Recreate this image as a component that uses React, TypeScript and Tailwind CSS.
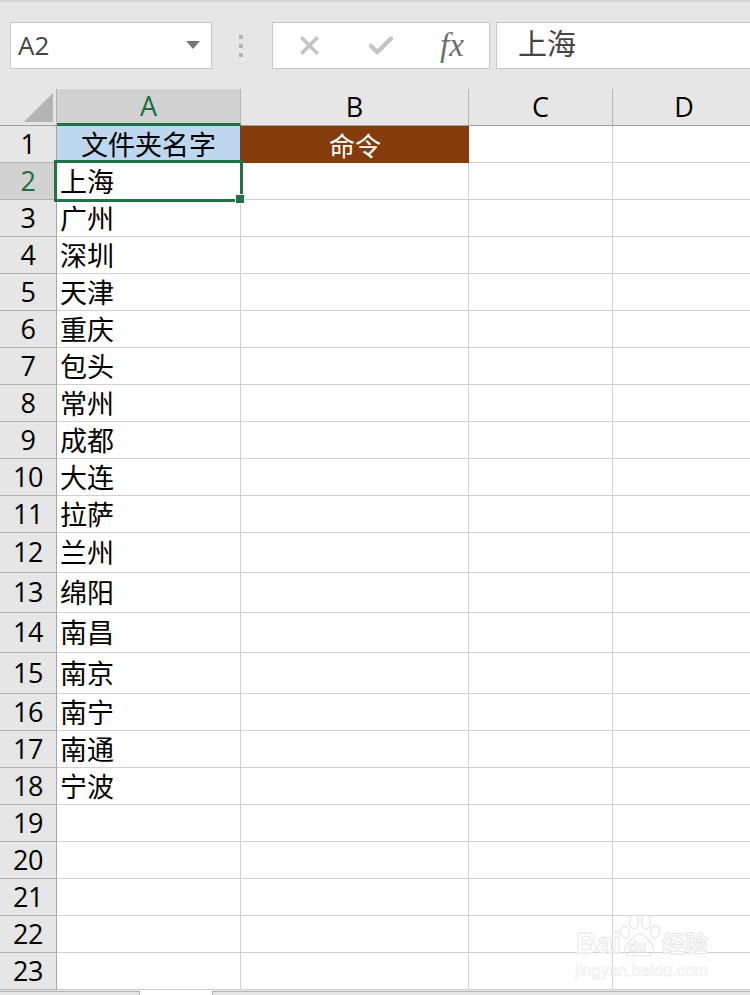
import { Check, X } from "lucide-react";

const latin = "font-['Open_Sans','Noto_Sans_CJK_SC',sans-serif]";
const cjk = "font-['Noto_Sans_CJK_SC',sans-serif]";

const rows: [number, string][] = [
  [37, "文件夹名字"],
  [37, "上海"],
  [37, "广州"],
  [37, "深圳"],
  [37, "天津"],
  [37, "重庆"],
  [37, "包头"],
  [37, "常州"],
  [37, "成都"],
  [37, "大连"],
  [37, "拉萨"],
  [40, "兰州"],
  [40, "绵阳"],
  [40, "南昌"],
  [41, "南京"],
  [37, "南宁"],
  [37, "南通"],
  [37, "宁波"],
  [37, ""],
  [37, ""],
  [37, ""],
  [37, ""],
  [37, ""],
];

function ColumnHead({ label, className }: { label: string; className: string }) {
  return (
    <div
      className={`flex items-center justify-center border-r border-b border-r-[#b4b4b4] border-b-[#9f9f9f] text-[27px] ${className}`}
    >
      {label}
    </div>
  );
}

function Row({ index, height, text }: { index: number; height: number; text: string }) {
  const active = index === 2;
  const first = index === 1;
  return (
    <div className="flex" style={{ height }}>
      <div
        className={`w-[57px] shrink-0 flex items-center justify-center border-r border-b border-r-[#a6a6a6] border-b-[#b4b4b4] text-[27px] tracking-[-0.5px] ${latin} ${
          active ? "bg-[#d2d2d2] text-[#1f6b45]" : "bg-[#e6e6e6] text-black"
        }`}
      >
        {index}
      </div>
      <div
        className={`w-[184px] shrink-0 flex items-center border-r border-b text-[27px] text-black ${cjk} ${
          first
            ? "justify-center bg-[#bdd7ee] border-b-[#d0d0d0] border-r-[#843c0c]"
            : "pl-[3px] bg-white border-[#d0d0d0]"
        }`}
      >
        {text}
      </div>
      <div
        className={`w-[228px] shrink-0 flex items-center justify-center border-b text-[26px] ${cjk} ${
          first
            ? "bg-[#843c0c] border-[#843c0c] text-white"
            : "bg-white border-r border-[#d0d0d0]"
        }`}
      >
        {first ? "命令" : ""}
      </div>
      <div className="w-[144px] shrink-0 bg-white border-r border-b border-[#d0d0d0]" />
      <div className="flex-1 bg-white border-b border-[#d0d0d0]" />
    </div>
  );
}

function Watermark() {
  return (
    <div className="absolute left-[574px] top-[914px] w-[136px] h-[66px] pointer-events-none text-white [-webkit-text-stroke:0.8px_#e4e4e4]">
      <div className="absolute left-[2px] top-[12px] text-[29px] leading-[34px] font-bold font-['Liberation_Sans',sans-serif]">
        Bai
      </div>
      <svg
        className="absolute left-[46px] top-0"
        width="42"
        height="46"
        viewBox="0 0 42 46"
        fill="none"
        stroke="#e6e6e6"
        strokeWidth="1.2"
      >
        <ellipse cx="5" cy="18" rx="4" ry="6" transform="rotate(-15 5 18)" />
        <ellipse cx="14" cy="8" rx="4.5" ry="7" />
        <ellipse cx="26" cy="8" rx="4.5" ry="7" />
        <ellipse cx="35" cy="18" rx="4.5" ry="6" transform="rotate(15 35 18)" />
        <path d="M20 20c5 0 7 5 11 9 4 4 4 13-4 13-3 0-5-1-8-1s-5 1-8 1c-7 0-8-8-4-12 5-4 7-10 13-10z" />
      </svg>
      <div className="absolute left-[54px] top-[24px] text-[15px] leading-[18px] font-bold font-['Liberation_Sans',sans-serif]">
        du
      </div>
      <div className={`absolute left-[88px] top-[13px] text-[23px] leading-[30px] font-bold whitespace-nowrap ${cjk}`}>
        经验
      </div>
      <div className="absolute left-[1px] top-[46px] text-[16.5px] leading-[20px] whitespace-nowrap font-['Liberation_Sans',sans-serif] [-webkit-text-stroke:0.5px_#e8e8e8]">
        jingyan.baidu.com
      </div>
    </div>
  );
}

export default function App() {
  return (
    <div className={`relative w-[750px] h-[995px] overflow-hidden bg-[#e6e6e6] ${latin}`}>
      {/* Formula bar */}
      <div className="h-[89px] pt-[20px] border-t-2 border-[#d4d4d4] flex items-start pl-[10px]">
        <div className="w-[202px] h-[47px] bg-white border border-[#c6c6c6] flex items-center pl-[7px] pr-[11px] justify-between">
          <span className="text-[26px] text-[#444444]">A2</span>
          <div className="w-0 h-0 border-x-[7px] border-x-transparent border-t-[8px] border-t-[#777777] mb-[2px]" />
        </div>
        <div className="w-[60px] h-[47px] flex flex-col items-center justify-center gap-[5px] pr-[2px]">
          <div className="w-[4px] h-[4px] bg-[#b4b4b4]" />
          <div className="w-[4px] h-[4px] bg-[#b4b4b4]" />
          <div className="w-[4px] h-[4px] bg-[#b4b4b4]" />
        </div>
        <div className="w-[218px] h-[47px] bg-white border border-[#c6c6c6] flex items-center pl-[22px]">
          <X size={29} strokeWidth={3} className="text-[#c4c4c4]" />
          <Check size={30} strokeWidth={3.5} className="text-[#c4c4c4] ml-[42px]" />
          <span className="ml-[44px] text-[33px] italic text-[#6e6e6e] font-['Liberation_Serif',serif]">fx</span>
        </div>
        <div className="ml-[6px] flex-1 h-[47px] bg-white border border-r-0 border-[#c6c6c6] flex items-center pl-[21px] pb-[6px]">
          <span className={`text-[29px] text-[#444444] ${cjk}`}>上海</span>
        </div>
      </div>

      {/* Column headers */}
      <div className="flex h-[37px]">
        <div className="w-[57px] shrink-0 border-r border-b border-r-[#b4b4b4] border-b-[#9f9f9f] pl-[24px] pt-[4px]">
          <div className="w-[29px] h-[29px] bg-[#b4b4b4] [clip-path:polygon(100%_0,100%_100%,0_100%)]" />
        </div>
        <ColumnHead label="A" className="w-[184px] shrink-0 bg-[#d2d2d2] text-[#1f6b45] border-b-[3px] border-b-[#217346]" />
        <ColumnHead label="B" className="w-[228px] shrink-0 text-black" />
        <ColumnHead label="C" className="w-[144px] shrink-0 text-black" />
        <ColumnHead label="D" className="flex-1 border-r-0 text-black pl-[5px]" />
      </div>

      {/* Rows */}
      {rows.map(([height, text], i) => (
        <Row key={i} index={i + 1} height={height} text={text} />
      ))}

      {/* Sheet tabs */}
      <div className="flex h-[5px] bg-[#e6e6e6]">
        <div className="w-[140px] mt-px border-t border-r border-[#b4b4b4]" />
        <div className="w-[72px] bg-white" />
        <div className="flex-1 mt-px border-t border-l border-[#b4b4b4]" />
      </div>

      {/* Selected cell */}
      <div className="absolute left-[54px] top-[160px] w-[189px] h-[42px] border-[3px] border-[#217346]" />
      <div className="absolute left-[235px] top-[194px] w-[10px] h-[10px] bg-[#217346] border border-white" />

      <Watermark />
    </div>
  );
}
